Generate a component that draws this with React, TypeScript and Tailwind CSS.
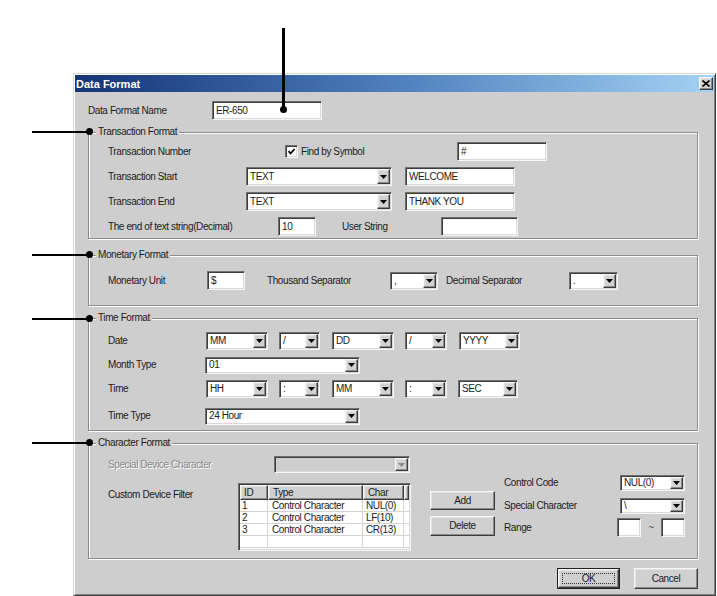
import type React from "react"

// Win2000-style "Data Format" dialog with callout lines

const sunken =
  "border border-t-[#707070] border-l-[#707070] border-b-[#f6f6f6] border-r-[#f6f6f6] shadow-[inset_1px_1px_0_#3c3c3c,inset_-1px_-1px_0_#dadada]"
const raised =
  "border border-t-[#f6f6f6] border-l-[#f6f6f6] border-b-[#3c3c3c] border-r-[#3c3c3c] shadow-[inset_-1px_-1px_0_#8a8a8a,inset_1px_1px_0_#e2e2e2]"

const Combo = ({ size, value, disabled }: { size: string; value?: string; disabled?: boolean }) => (
  <div className={`${size} shrink-0 flex p-[1px] ${sunken} ${disabled ? "bg-[#cecece]" : "bg-white"}`}>
    <span className="flex-1 flex items-center pl-[2px] overflow-hidden whitespace-nowrap">{value}</span>
    <span className={`w-[13px] shrink-0 flex items-center justify-center bg-[#d2d2d2] ${raised}`}>
      <svg width="7" height="4" viewBox="0 0 7 4">
        <path d="M0 0h7L3.5 4z" fill={disabled ? "#8a8a8a" : "#000"} />
      </svg>
    </span>
  </div>
)

const Field = ({ size, value }: { size: string; value?: string }) => (
  <div className={`${size} shrink-0 bg-white ${sunken} flex items-center px-[3px] whitespace-nowrap`}>{value}</div>
)

const Button = ({ size, children }: { size: string; children: React.ReactNode }) => (
  <div className={`${size} shrink-0 bg-[#d0d0d0] ${raised} flex items-center justify-center`}>{children}</div>
)

const Group = ({ title, cls, children }: { title: string; cls: string; children: React.ReactNode }) => (
  <div className={`${cls} border border-[#8c8c8c] shadow-[inset_1px_1px_0_#fff,1px_1px_0_#fff] pl-[19px]`}>
    <div className="-mt-[7px] -ml-[12px] w-fit px-[2px] bg-[#cecece] leading-[12px]">{title}</div>
    {children}
  </div>
)

const Check = () => (
  <div className={`w-[13px] h-[13px] shrink-0 bg-white ${sunken} flex items-center justify-center`}>
    <svg width="9" height="9" viewBox="0 0 9 9">
      <path d="M1.5 4.2 L3.6 6.4 L7.6 2" stroke="#000" strokeWidth="1.7" fill="none" />
    </svg>
  </div>
)

const Callout = ({ top }: { top: string }) => (
  <div className={`absolute left-[32px] ${top} flex items-center`}>
    <div className="w-[56px] h-[2px] bg-black" />
    <div className="w-[7px] h-[7px] -ml-[2px] rounded-full bg-black" />
  </div>
)

const rows = [
  { id: "1", type: "Control Character", ch: "NUL(0)" },
  { id: "2", type: "Control Character", ch: "LF(10)" },
  { id: "3", type: "Control Character", ch: "CR(13)" },
  { id: "", type: "", ch: "" },
]

export default function App() {
  return (
    <div className="relative w-[717px] h-[596px] overflow-hidden bg-white font-['Liberation_Sans',Arial,sans-serif] text-[10px] tracking-[-0.4px] text-[#1c1c1c] leading-[12px]">
      <div className="pt-[73px] pl-[73px]">
        <div className="w-[643px] h-[523px] bg-[#cecece] p-[1px] border border-t-[#d8d8d8] border-l-[#d8d8d8] border-r-[#404040] border-b-[#404040] shadow-[inset_1px_1px_0_#fff,inset_-1px_-1px_0_#808080]">
          {/* title bar */}
          <div className="h-[17px] flex items-center pl-[1px] bg-gradient-to-r from-[#163476] via-[#4f7fbc] to-[#a4d2f4]">
            <span className="flex-1 text-white font-bold text-[11px] tracking-normal">Data Format</span>
            <div className={`w-[14px] h-[13px] mr-[1px] bg-[#d2d2d2] ${raised} flex items-center justify-center`}>
              <svg width="8" height="7" viewBox="0 0 8 7">
                <path d="M0.5 0.5 L7.5 6.5 M7.5 0.5 L0.5 6.5" stroke="#000" strokeWidth="1.6" />
              </svg>
            </div>
          </div>

          <div className="pl-[13px] pr-[16px]">
            <div className="mt-[9px] flex items-center h-[19px]">
              <span className="w-[124px] shrink-0">Data Format Name</span>
              <Field size="w-[110px] h-[19px]" value="ER-650" />
            </div>

            <Group title="Transaction Format" cls="mt-[12px] h-[107px]">
              <div className="mt-[4px] flex flex-col gap-[6px]">
                <div className="flex items-center h-[19px]">
                  <span className="w-[177px] shrink-0">Transaction Number</span>
                  <Check />
                  <span className="ml-[3px] w-[156px] shrink-0">Find by Symbol</span>
                  <Field size="w-[90px] h-[19px]" value="#" />
                </div>
                <div className="flex items-center h-[19px]">
                  <span className="w-[138px] shrink-0">Transaction Start</span>
                  <Combo size="w-[146px] h-[19px]" value="TEXT" />
                  <Field size="ml-[13px] w-[110px] h-[19px]" value="WELCOME" />
                </div>
                <div className="flex items-center h-[19px]">
                  <span className="w-[138px] shrink-0">Transaction End</span>
                  <Combo size="w-[146px] h-[19px]" value="TEXT" />
                  <Field size="ml-[13px] w-[110px] h-[19px]" value="THANK YOU" />
                </div>
                <div className="flex items-center h-[19px]">
                  <span className="w-[170px] shrink-0">The end of text string(Decimal)</span>
                  <Field size="w-[38px] h-[19px]" value="10" />
                  <span className="ml-[26px] w-[99px] shrink-0">User String</span>
                  <Field size="w-[77px] h-[19px]" />
                </div>
              </div>
            </Group>

            <Group title="Monetary Format" cls="mt-[16px] h-[51px]">
              <div className="mt-[10px] flex items-center h-[19px]">
                <span className="w-[99px] shrink-0">Monetary Unit</span>
                <Field size="w-[38px] h-[19px]" value="$" />
                <span className="ml-[22px] w-[123px] shrink-0">Thousand Separator</span>
                <Combo size="w-[48px] h-[18px]" value="," />
                <span className="ml-[8px] w-[123px] shrink-0">Decimal Separator</span>
                <Combo size="w-[49px] h-[18px]" value="." />
              </div>
            </Group>

            <Group title="Time Format" cls="mt-[12px] h-[113px]">
              <div className="mt-[8px] flex flex-col">
                <div className="flex items-center h-[18px]">
                  <span className="w-[98px] shrink-0">Date</span>
                  <Combo size="w-[62px] h-[18px]" value="MM" />
                  <Combo size="ml-[11px] w-[41px] h-[18px]" value="/" />
                  <Combo size="ml-[12px] w-[62px] h-[18px]" value="DD" />
                  <Combo size="ml-[11px] w-[42px] h-[18px]" value="/" />
                  <Combo size="ml-[12px] w-[61px] h-[18px]" value="YYYY" />
                </div>
                <div className="mt-[6px] flex items-center h-[18px]">
                  <span className="w-[97px] shrink-0">Month Type</span>
                  <Combo size="w-[155px] h-[17px]" value="01" />
                </div>
                <div className="mt-[6px] flex items-center h-[18px]">
                  <span className="w-[98px] shrink-0">Time</span>
                  <Combo size="w-[62px] h-[18px]" value="HH" />
                  <Combo size="ml-[11px] w-[41px] h-[18px]" value=":" />
                  <Combo size="ml-[12px] w-[62px] h-[18px]" value="MM" />
                  <Combo size="ml-[11px] w-[42px] h-[18px]" value=":" />
                  <Combo size="ml-[11px] w-[60px] h-[18px]" value="SEC" />
                </div>
                <div className="mt-[9px] flex items-center h-[18px]">
                  <span className="w-[97px] shrink-0">Time Type</span>
                  <Combo size="w-[155px] h-[17px]" value="24 Hour" />
                </div>
              </div>
            </Group>

            <Group title="Character Format" cls="mt-[12px] h-[116px]">
              <div className="mt-[7px] flex items-center h-[17px]">
                <span className="w-[166px] shrink-0 text-[#8a8a8a] [text-shadow:1px_1px_0_#fff]">Special Device Character</span>
                <Combo size="w-[136px] h-[17px]" disabled />
              </div>
              <div className="mt-[2px] flex items-start">
                <span className="mt-[14px] w-[130px] shrink-0">Custom Device Filter</span>
                {/* list view */}
                <div className={`mt-[8px] w-[173px] h-[68px] shrink-0 bg-white p-[1px] ${sunken}`}>
                  <div className="flex h-[15px] bg-[#d0d0d0]">
                    <div className={`w-[28px] ${raised} pl-[3px] flex items-center`}>ID</div>
                    <div className={`w-[95px] ${raised} pl-[4px] flex items-center`}>Type</div>
                    <div className={`w-[41px] ${raised} pl-[4px] flex items-center`}>Char</div>
                    <div className={`flex-1 ${raised}`} />
                  </div>
                  {rows.map((r, i) => (
                    <div key={i} className="flex h-[12px] border-b border-[#d4d4d4]">
                      <div className="w-[28px] pl-[2px] border-r border-[#d4d4d4]">{r.id}</div>
                      <div className="w-[95px] pl-[4px] border-r border-[#d4d4d4] whitespace-nowrap">{r.type}</div>
                      <div className="w-[41px] pl-[3px] border-r border-[#d4d4d4]">{r.ch}</div>
                    </div>
                  ))}
                </div>
                <div className="ml-[19px] mt-[16px] flex flex-col gap-[6px]">
                  <Button size="w-[65px] h-[19px]">Add</Button>
                  <Button size="w-[65px] h-[20px]">Delete</Button>
                </div>
                <div className="ml-[9px] w-[181px] shrink-0 flex flex-col">
                  <div className="flex items-center h-[16px]">
                    <span className="w-[116px] shrink-0">Control Code</span>
                    <Combo size="w-[65px] h-[16px]" value="NUL(0)" />
                  </div>
                  <div className="mt-[7px] flex items-center h-[16px]">
                    <span className="w-[116px] shrink-0">Special Character</span>
                    <Combo size="w-[65px] h-[16px]" value="\" />
                  </div>
                  <div className="mt-[4px] flex items-center h-[19px]">
                    <span className="w-[113px] shrink-0">Range</span>
                    <Field size="w-[24px] h-[19px]" />
                    <span className="w-[20px] text-center text-[#555]">~</span>
                    <Field size="w-[24px] h-[19px]" />
                  </div>
                </div>
              </div>
            </Group>

            <div className="mt-[9px] flex justify-end gap-[14px]">
              <div className="w-[63px] h-[21px] border border-[#202020] flex">
                <div className={`flex-1 bg-[#d0d0d0] ${raised} p-[3px] flex`}>
                  <span className="flex-1 border border-dotted border-[#333] flex items-center justify-center">OK</span>
                </div>
              </div>
              <Button size="w-[64px] h-[21px]">Cancel</Button>
            </div>
          </div>
        </div>
      </div>

      {/* callout lines */}
      <div className="absolute left-[282px] top-[28px] w-[3px] h-[82px] bg-black" />
      <div className="absolute left-[280px] top-[106px] w-[7px] h-[7px] rounded-full bg-black" />
      <Callout top="top-[128px]" />
      <Callout top="top-[251px]" />
      <Callout top="top-[315px]" />
      <Callout top="top-[439px]" />
    </div>
  )
}
